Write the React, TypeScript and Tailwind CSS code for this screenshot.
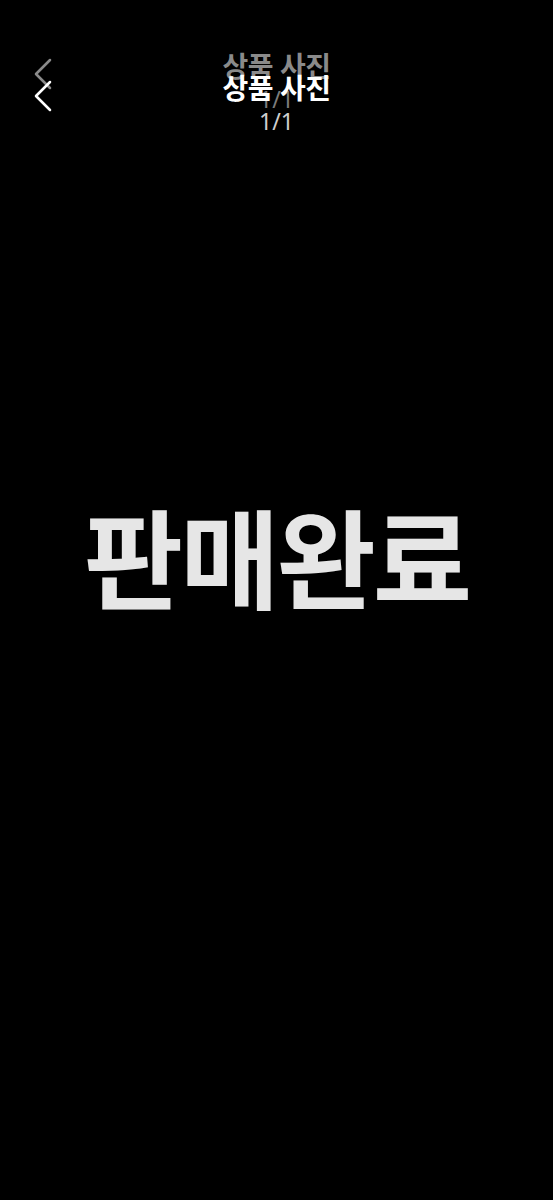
import { ChevronLeft } from "lucide-react";

const FONT = "font-['Noto_Sans','Noto_Sans_CJK_KR',sans-serif]";

/** 상단 헤더: 뒤로가기 + 제목 + 페이지 표시. */
function Header({ ghost = false }: { ghost?: boolean }) {
  return (
    <div className={"relative flex h-[80px] items-start justify-center " + (ghost ? "text-[#9a9a9a]" : "text-white")}>
      <button className="absolute left-[15px] top-[4px]">
        <ChevronLeft className="h-[56px] w-[56px]" strokeWidth={1.1} />
      </button>
      <div className="flex flex-col items-center pt-[6px]">
        <h1 className="text-[28px] font-bold leading-[36px] tracking-[-0.5px]">상품 사진</h1>
        <span className={"text-[23px] leading-[30px] " + (ghost ? "text-[#8a8a8a]" : "text-[#cfcfcf]")}>1/1</span>
      </div>
    </div>
  );
}

export default function App() {
  return (
    <div className={"relative flex min-h-[1200px] w-full flex-col bg-black " + FONT}>
      <div className="relative pt-[64px]">
        <div className="absolute inset-x-0 top-[42px] opacity-90">
          <Header ghost />
        </div>
        <Header />
      </div>
      <div className="flex flex-1 items-start justify-center pt-[362px]">
        <span className="text-[108px] font-bold leading-none tracking-[-3px] text-[#e6e6e6]">판매완료</span>
      </div>
    </div>
  );
}
